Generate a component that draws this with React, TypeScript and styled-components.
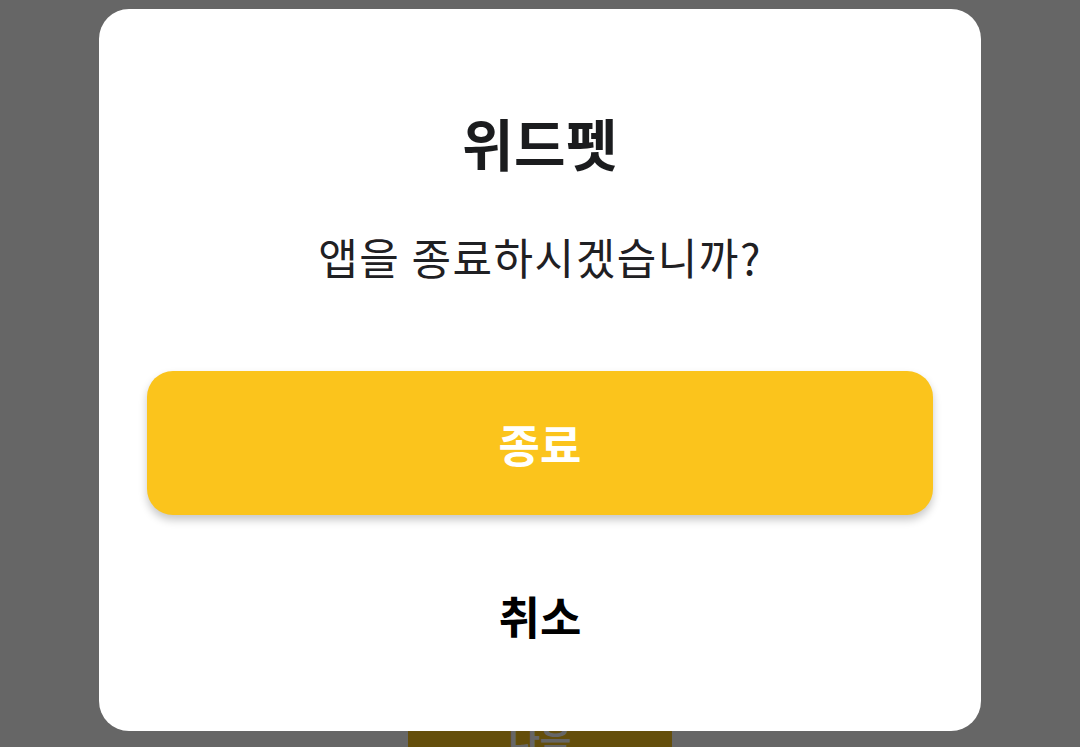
import styled, { createGlobalStyle } from "styled-components";

const GlobalStyle = createGlobalStyle`
  html, body {
    margin: 0;
    padding: 0;
    background: #fff;
    font-family: "Noto Sans CJK KR", "Noto Sans", sans-serif;
  }
  * {
    box-sizing: border-box;
  }
`;

const Page = styled.main`
  height: 747px;
  overflow: hidden;
  display: flex;
  flex-direction: column;
  justify-content: flex-end;
  align-items: center;
`;

const NextButton = styled.button`
  flex-shrink: 0;
  width: 264px;
  height: 80px;
  margin-bottom: -31px;
  border: none;
  border-radius: 12px;
  background: #fbc41c;
  color: #fff;
  font-family: inherit;
  font-size: 34px;
  font-weight: 700;
`;

const Overlay = styled.div`
  position: fixed;
  inset: 0;
  background: rgba(0, 0, 0, 0.6);
  display: flex;
  justify-content: center;
  align-items: flex-start;
  padding-top: 9px;
`;

const Dialog = styled.section`
  width: 882px;
  height: 722px;
  background: #fff;
  border-radius: 30px;
  padding: 100px 48px 0;
  display: flex;
  flex-direction: column;
  align-items: stretch;
  text-align: center;
`;

const Title = styled.h1`
  margin: 0;
  font-size: 56px;
  line-height: 66px;
  font-weight: 700;
  letter-spacing: 0.5px;
  color: #1b1c1e;
`;

const Message = styled.p`
  margin: 56px 0 0;
  font-size: 43px;
  line-height: 50px;
  font-weight: 400;
  letter-spacing: 1.5px;
  color: #1f2023;
`;

const ActionButton = styled.button<{ $primary?: boolean }>`
  height: 144px;
  border: none;
  border-radius: 26px;
  font-family: inherit;
  font-size: 45px;
  font-weight: 700;
  cursor: pointer;
  background: ${(p) => (p.$primary ? "#fbc41c" : "transparent")};
  color: ${(p) => (p.$primary ? "#fff" : "#000")};
  box-shadow: ${(p) => (p.$primary ? "0 5px 9px rgba(0, 0, 0, 0.22)" : "none")};
  margin-top: ${(p) => (p.$primary ? "90px" : "28px")};
`;

const App = () => {
  return (
    <>
      <GlobalStyle />
      <Page>
        <NextButton type="button">다음</NextButton>
      </Page>
      <Overlay>
        <Dialog role="dialog">
          <Title>위드펫</Title>
          <Message>앱을 종료하시겠습니까?</Message>
          <ActionButton type="button" $primary>
            종료
          </ActionButton>
          <ActionButton type="button">취소</ActionButton>
        </Dialog>
      </Overlay>
    </>
  );
};

export default App;
